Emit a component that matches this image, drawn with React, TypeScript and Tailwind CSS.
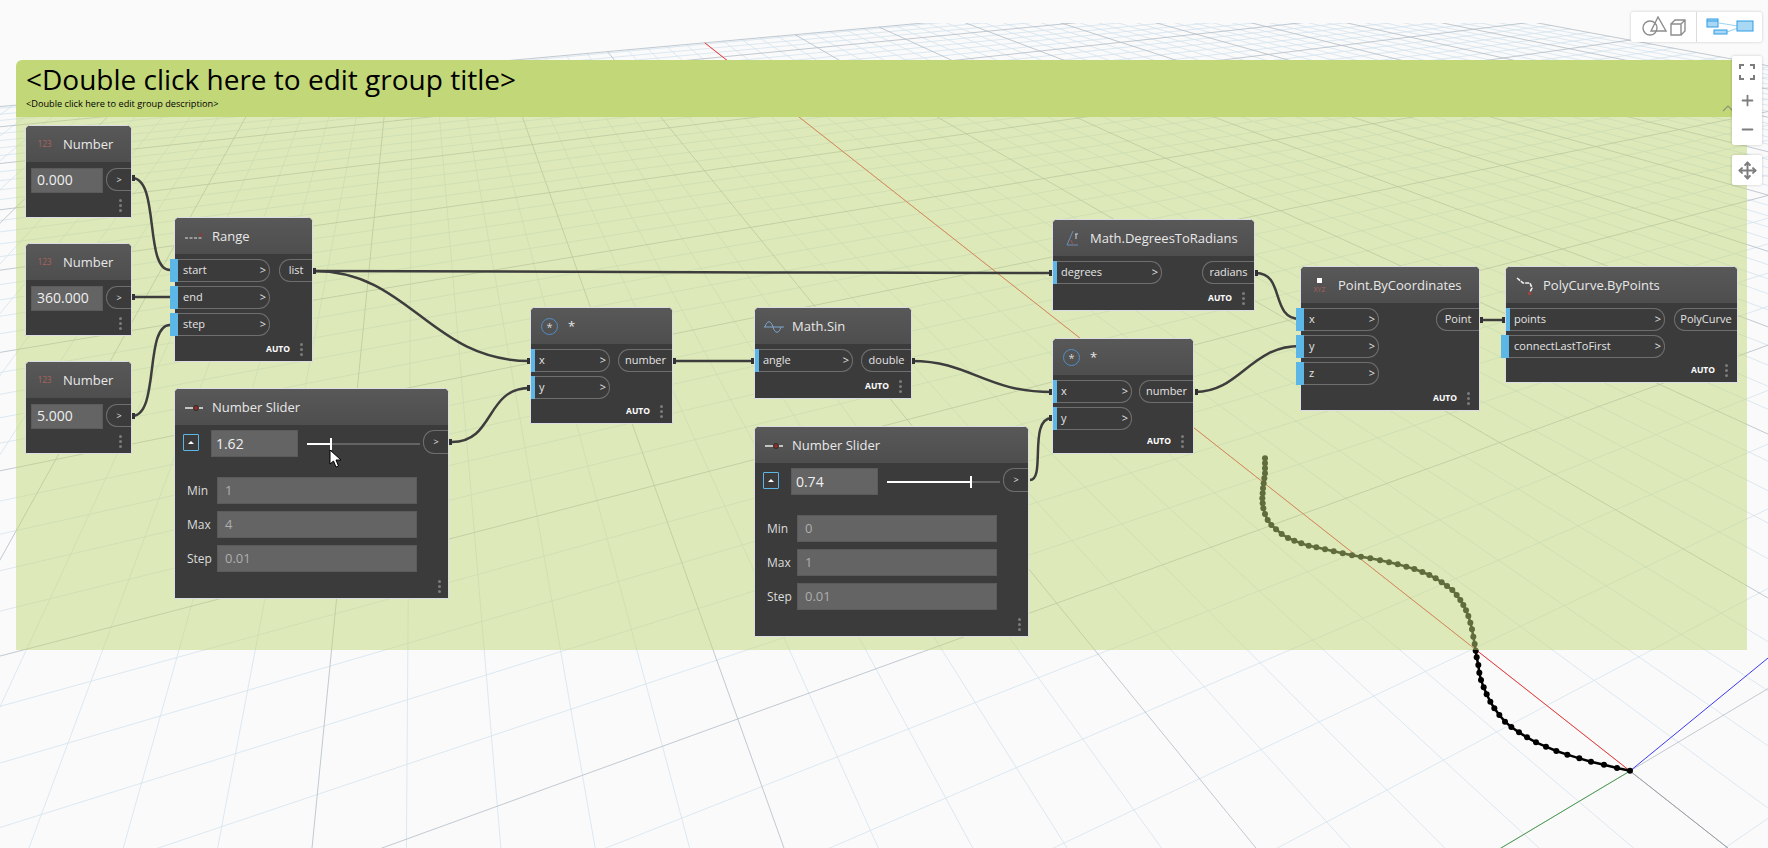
import type { ReactNode } from 'react';
import { Minus, Move, Plus } from 'lucide-react';
import clsx from 'clsx';

// ground plane of the 3D view: two vanishing points and the world origin on screen
const V1 = [414, -186];
const V2 = [3232, -186];
const O = [1630, 771];
const SU = 0.0735;
const SV = 0.031;

function project(u: number, v: number) {
  const a = u * SU;
  const b = v * SV;
  const w = a + b + 1;
  return [(a * V1[0] + b * V2[0] + O[0]) / w, (a * V1[1] + b * V2[1] + O[1]) / w];
}

function seg(u1: number, v1: number, u2: number, v2: number) {
  const p = project(u1, v1);
  const q = project(u2, v2);
  return `M${p[0].toFixed(1)} ${p[1].toFixed(1)}L${q[0].toFixed(1)} ${q[1].toFixed(1)}`;
}

function gridPaths() {
  const U_MAX = 43.3;
  const V_MIN = -30;
  const V_MAX = 45;
  let minor = '';
  let major = seg(U_MAX, V_MIN, U_MAX, V_MAX);
  for (let u = -13; u <= 43; u++) {
    const vFrom = Math.max(V_MIN, (0.03 - 1 - u * SU) / SV);
    const d = seg(u, vFrom, u, V_MAX);
    if (u % 5 === 0) major += d;
    else minor += d;
  }
  for (let v = V_MIN; v <= V_MAX; v++) {
    const uFrom = Math.max(-50, (0.03 - 1 - v * SV) / SU);
    const d = seg(uFrom, v, U_MAX, v);
    if (v % 5 === 0) major += d;
    else minor += d;
  }
  return { minor, major };
}

// curve points read off the picture, in a 3x crop with origin (1200,440)
const curve = [
  [195, 55], [195, 70], [195, 85], [195, 100], [193, 115], [191, 130], [189, 145], [188, 160], [187, 175], [188, 190],
  [190, 205], [195, 222], [203, 240], [214, 255], [228, 268], [245, 282], [264, 294], [283, 302], [304, 310], [326, 317],
  [349, 322], [375, 328], [401, 334], [428, 340], [456, 346], [483, 350], [511, 355], [540, 361], [567, 367], [593, 373],
  [619, 380], [643, 387], [667, 396], [688, 405], [707, 415], [725, 427], [741, 438], [757, 450], [770, 465], [781, 480],
  [790, 495], [798, 511], [805, 528], [811, 548], [816, 568], [820, 590], [824, 612], [827, 632], [830, 652], [835, 675],
  [838, 698], [843, 720], [851, 742], [860, 763], [871, 785], [883, 805], [898, 825], [915, 845], [934, 861], [957, 877],
  [981, 892], [1008, 907], [1038, 920], [1069, 933], [1102, 944], [1138, 955], [1173, 965], [1212, 974], [1251, 984], [1290, 992],
].map(([x, y]) => [1200 + x / 3, 440 + y / 3]);

function Ground() {
  const { minor, major } = gridPaths();
  const red = project(43.3, 0);
  const back = project(-12, 0);
  const greenEnd = project(0, -8);
  return (
    <svg className="absolute inset-0" width={1768} height={848}>
      <defs>
        <clipPath id="view">
          <rect x="0" y="23" width="1768" height="825" />
        </clipPath>
      </defs>
      <g clipPath="url(#view)">
        <path d={minor} stroke="#d4e3ee" strokeWidth={0.8} fill="none" />
        <path d={major} stroke="#b2bdc5" strokeWidth={0.8} fill="none" />
        <line x1={O[0]} y1={O[1]} x2={back[0]} y2={back[1]} stroke="#9aa0a4" strokeWidth={1} />
        <line x1={O[0]} y1={O[1]} x2={red[0]} y2={red[1]} stroke="#f23a3a" strokeWidth={1} />
        <line x1={O[0]} y1={O[1]} x2={greenEnd[0]} y2={greenEnd[1]} stroke="#4f9e4f" strokeWidth={1} />
        <line x1={O[0]} y1={O[1]} x2={1768} y2={658} stroke="#3a3af0" strokeWidth={1} />
      </g>
      <polyline points={curve.map((p) => p.join(',')).join(' ')} fill="none" stroke="#000" strokeWidth={2.5} />
      {curve.map((p, i) => (
        <circle key={i} cx={p[0]} cy={p[1]} r={3} fill="#000" />
      ))}
    </svg>
  );
}

const wires = [
  'M132 178C160 178 144 270 170 270',
  'M132 297L170 297',
  'M132 416C160 416 144 325 170 325',
  'M314 271C500 271 800 273 1052 273',
  'M314 271C410 271 430 361 530 361',
  'M452 442C495 442 485 388 530 388',
  'M673 361L754 361',
  'M912 361C970 361 985 392 1052 392',
  'M1030 480C1046 480 1028 418 1052 418',
  'M1195 392C1240 392 1250 346 1300 346',
  'M1256 273C1285 273 1270 319 1300 319',
  'M1481 320L1505 320',
];

// little stubs where a wire leaves or enters a port
const stubs = [
  [132, 178], [132, 297], [132, 416], [313, 271], [449, 442], [673, 361], [751, 361], [912, 361],
  [527, 361], [527, 388], [1049, 273], [1255, 273], [1049, 392], [1049, 418], [1195, 392], [1480, 320], [1502, 320],
];

function Wires() {
  return (
    <svg className="absolute inset-0" width={1768} height={848} fill="none">
      {wires.map((d) => (
        <path key={d} d={d} stroke="#3d3d3d" strokeWidth={2.5} />
      ))}
      {stubs.map(([x, y]) => (
        <rect key={`${x}-${y}`} x={x} y={y - 3} width={3} height={6} fill="#333" />
      ))}
    </svg>
  );
}

function Dots({ className }: { className?: string }) {
  return (
    <span className={clsx('flex flex-col gap-[2px]', className)}>
      <i className="h-[3px] w-[3px] rounded-full bg-[#7c7c7c]" />
      <i className="h-[3px] w-[3px] rounded-full bg-[#7c7c7c]" />
      <i className="h-[3px] w-[3px] rounded-full bg-[#7c7c7c]" />
    </span>
  );
}

function Auto() {
  return (
    <div className="mt-auto mb-[5px] flex h-[14px] items-center justify-end gap-[10px] pr-[9px]">
      <span className="text-[8.5px] font-bold text-white">AUTO</span>
      <Dots />
    </div>
  );
}

function Input({ label, w, out }: { label: string; w: string; out?: boolean }) {
  return (
    <div className={clsx('relative flex h-[23px] items-center justify-between rounded-r-[11px] border-y border-r border-[#6e6e6e] pr-[3px] pl-[8px] text-[11px] text-[#e4e4e4]', w)}>
      <i className={clsx('absolute top-[-1px] bottom-[-1px] bg-[#5cb6e6]', out ? 'left-[-5px] w-[8px]' : 'left-0 w-[4px]')} />
      <span className="relative">{label}</span>
      <span className="text-[11px]">&gt;</span>
    </div>
  );
}

function Output({ label, className }: { label: string; className?: string }) {
  return (
    <div className={clsx('flex h-[23px] items-center justify-center rounded-l-[11px] border-y border-l border-[#6e6e6e] text-[11px] text-[#e4e4e4]', className)}>
      {label}
    </div>
  );
}

function Node({ title, icon, className, children }: { title: string; icon: ReactNode; className: string; children: ReactNode }) {
  return (
    <div className={clsx('absolute flex flex-col rounded-t-[5px] border border-[#dcdce4] bg-[#3b3b3b]', className)}>
      <div className="flex h-[36px] shrink-0 items-center rounded-t-[4px] bg-gradient-to-b from-[#585858] to-[#4e4e4e] pt-[1px]">
        <span className="flex w-[37px] shrink-0 items-center justify-center">{icon}</span>
        <span className="text-[13px] text-[#e8e8e8]">{title}</span>
      </div>
      {children}
    </div>
  );
}

function NumberNode({ value, className }: { value: string; className: string }) {
  return (
    <Node
      title="Number"
      className={className}
      icon={<span className="text-[8.5px] tracking-tight text-[#a8635a]">123</span>}
    >
      <div className="flex items-start justify-between pt-[6px] pl-[5px]">
        <div className="flex h-[25px] w-[72px] items-center border border-[#5b5b5b] bg-[#646464] pb-[3px] pl-[5px] text-[14px] text-[#efefef]">{value}</div>
        <div className="flex h-[23px] w-[25px] items-center justify-center rounded-l-[11px] border-y border-l border-[#6e6e6e] text-[9px] text-[#e4e4e4]">&gt;</div>
      </div>
      <Dots className="mt-auto mb-[5px] ml-[93px]" />
    </Node>
  );
}

function Field({ label, value }: { label: string; value: string }) {
  return (
    <div className="flex h-[27px] items-center">
      <span className="w-[30px] text-[12px] text-[#dcdcdc]">{label}</span>
      <div className="flex h-full w-[200px] items-center border border-[#5b5b5b] bg-[#646464] pl-[7px] text-[13px] text-[#aeaeae]">{value}</div>
    </div>
  );
}

function SliderIcon() {
  return (
    <svg width="18" height="8" viewBox="0 0 18 8">
      <path d="M0 4h18" stroke="#e8e8e8" strokeWidth="1.5" />
      <circle cx="11" cy="4" r="2.5" fill="#8a2f28" stroke="#2c2c2c" />
    </svg>
  );
}

function SliderNode({ value, min, max, fill, className }: { value: string; min: string; max: string; fill: string; className: string }) {
  return (
    <Node title="Number Slider" className={className} icon={<SliderIcon />}>
      <div className="flex items-start pt-[5px]">
        <div className="mt-[4px] ml-[8px] flex h-[17px] w-[16px] items-center justify-center rounded-[1px] border border-[#5cb6e6]">
          <i className="border-x-[3px] border-b-[3px] border-x-transparent border-b-white" />
        </div>
        <div className="ml-[12px] flex h-[27px] w-[87px] items-center border border-[#5b5b5b] bg-[#646464] pl-[4px] text-[14px] text-[#efefef]">{value}</div>
        <div className="relative mt-[13px] ml-[9px] h-[2px] w-[114px] bg-[#646464]">
          <div className={clsx('absolute inset-y-0 left-0 bg-white', fill)} />
          <div className={clsx('absolute top-[-5px] h-[12px] w-[2px] bg-white', fill === 'w-[24px]' ? 'left-[23px]' : 'left-[83px]')} />
        </div>
        <div className="ml-[3px] flex h-[24px] w-[25px] items-center justify-center rounded-l-[11px] border-y border-l border-[#6e6e6e] text-[9px] text-[#e4e4e4]">&gt;</div>
      </div>
      <div className="mt-[20px] flex flex-col gap-[7px] pl-[12px]">
        <Field label="Min" value={min} />
        <Field label="Max" value={max} />
        <Field label="Step" value="0.01" />
      </div>
      <Dots className="mt-auto mb-[5px] ml-[263px]" />
    </Node>
  );
}

function StarIcon() {
  return (
    <span className="flex h-[17px] w-[17px] items-center justify-center rounded-full border border-[#4f8fc9] text-[11px] leading-none text-[#d8d8d8]">*</span>
  );
}

function StarNode({ className }: { className: string }) {
  return (
    <Node title="*" className={className} icon={<StarIcon />}>
      <div className="flex justify-between pt-[5px]">
        <div className="flex flex-col gap-[4px]">
          <Input label="x" w="w-[79px]" />
          <Input label="y" w="w-[79px]" />
        </div>
        <Output label="number" className="w-[54px]" />
      </div>
      <Auto />
    </Node>
  );
}

function ToolbarGeometry() {
  return (
    <svg width="46" height="22" viewBox="0 0 46 22" fill="none" stroke="#8d8d8d" strokeWidth="1.4">
      <circle cx="9" cy="12" r="7" />
      <path d="M17 1L10 15H25Z" />
      <path d="M30 8h10v11H30zM30 8l4-4h10v11l-4 4M40 8l4-4" />
    </svg>
  );
}

function ToolbarGraph() {
  return (
    <svg width="48" height="20" viewBox="0 0 48 20" fill="none">
      <path d="M13 6L32 9M21 15L32 11" stroke="#9fd4f2" strokeWidth="1.2" />
      <rect x="1" y="2" width="11" height="8" fill="#a9d8f5" stroke="#2f9be6" />
      <path d="M1 4h11M31 6h16" stroke="#2f9be6" />
      <rect x="8" y="13" width="13" height="4" fill="#a9d8f5" stroke="#2f9be6" />
      <rect x="31" y="4" width="16" height="10" fill="#a9d8f5" stroke="#2f9be6" />
    </svg>
  );
}

export default function App() {
  return (
    <div className="relative h-[848px] w-[1768px] overflow-hidden bg-[#fafafb] [font-family:'Open_Sans',sans-serif]">
      <Ground />

      {/* group */}
      <div className="absolute top-[60px] left-[16px] flex h-[590px] w-[1731px] flex-col rounded-t-[6px]">
        <div className="relative h-[57px] shrink-0 rounded-t-[6px] bg-[#c2d778] pl-[10px] text-black">
          <div className="text-[28px] leading-[38px]">&lt;Double click here to edit group title&gt;</div>
          <div className="text-[9.2px] leading-[11px]">&lt;Double click here to edit group description&gt;</div>
          <svg className="absolute top-[45px] right-[13px]" width="12" height="7" viewBox="0 0 12 7" fill="none" stroke="#8c9573" strokeWidth="1.2">
            <path d="M1 6l5-5 5 5" />
          </svg>
        </div>
        <div className="flex-1 bg-[#c2d778]/50" />
      </div>

      <Wires />

      <NumberNode value="0.000" className="top-[125px] left-[25px] h-[93px] w-[107px]" />
      <NumberNode value="360.000" className="top-[243px] left-[25px] h-[93px] w-[107px]" />
      <NumberNode value="5.000" className="top-[361px] left-[25px] h-[93px] w-[107px]" />

      <Node
        title="Range"
        className="top-[217px] left-[174px] h-[145px] w-[139px]"
        icon={
          <svg width="18" height="8" viewBox="0 0 18 8">
            <path d="M0 5h18" stroke="#e0e0e0" strokeWidth="1" strokeDasharray="3 1.5" />
            <path d="M16 0v4M14 2h4" stroke="#8f3b33" strokeWidth="1" />
          </svg>
        }
      >
        <div className="flex justify-between pt-[5px]">
          <div className="flex flex-col gap-[4px]">
            <Input label="start" w="w-[95px]" out />
            <Input label="end" w="w-[95px]" out />
            <Input label="step" w="w-[95px]" out />
          </div>
          <Output label="list" className="w-[33px]" />
        </div>
        <Auto />
      </Node>

      <SliderNode value="1.62" min="1" max="4" fill="w-[24px]" className="top-[388px] left-[174px] h-[211px] w-[275px]" />

      <StarNode className="top-[307px] left-[530px] h-[117px] w-[143px]" />

      <Node
        title="Math.Sin"
        className="top-[307px] left-[754px] h-[92px] w-[158px]"
        icon={
          <svg width="20" height="14" viewBox="0 0 20 14" fill="none" stroke="#7ea6cf" strokeWidth="1">
            <path d="M0 7h20" />
            <path d="M1 7C3 0 7 0 9 7S15 14 17 7" />
          </svg>
        }
      >
        <div className="flex justify-between pt-[5px]">
          <Input label="angle" w="w-[98px]" />
          <Output label="double" className="w-[50px]" />
        </div>
        <Auto />
      </Node>

      <SliderNode value="0.74" min="0" max="1" fill="w-[84px]" className="top-[426px] left-[754px] h-[211px] w-[275px]" />

      <StarNode className="top-[338px] left-[1052px] h-[116px] w-[142px]" />

      <Node
        title="Math.DegreesToRadians"
        className="top-[219px] left-[1052px] h-[92px] w-[203px]"
        icon={
          <svg width="16" height="18" viewBox="0 0 16 18" fill="none" strokeWidth="1">
            <path d="M9 1L3 15h11" stroke="#6a8fb8" />
            <path d="M7 10l2 5" stroke="#a0544a" />
            <path d="M11 4h3M12 4v5" stroke="#cfcfcf" />
          </svg>
        }
      >
        <div className="flex justify-between pt-[5px]">
          <Input label="degrees" w="w-[109px]" />
          <Output label="radians" className="w-[52px]" />
        </div>
        <Auto />
      </Node>

      <Node
        title="Point.ByCoordinates"
        className="top-[266px] left-[1300px] h-[145px] w-[180px]"
        icon={
          <span className="flex flex-col items-center leading-none">
            <i className="h-[5px] w-[5px] bg-white" />
            <span className="mt-[3px] text-[7px] text-[#a8635a]">XYZ</span>
          </span>
        }
      >
        <div className="flex justify-between pt-[5px]">
          <div className="flex flex-col gap-[4px]">
            <Input label="x" w="w-[78px]" out />
            <Input label="y" w="w-[78px]" out />
            <Input label="z" w="w-[78px]" out />
          </div>
          <Output label="Point" className="w-[43px]" />
        </div>
        <Auto />
      </Node>

      <Node
        title="PolyCurve.ByPoints"
        className="top-[266px] left-[1505px] h-[117px] w-[233px]"
        icon={
          <svg width="20" height="20" viewBox="0 0 20 20" fill="none">
            <path d="M2 2L8 7H15L17 12L14 18" stroke="#f0f0f0" strokeWidth="1.6" strokeDasharray="4 1" />
            <rect x="13" y="16" width="3" height="3" fill="#a3423a" />
          </svg>
        }
      >
        <div className="flex justify-between pt-[5px]">
          <div className="flex flex-col gap-[4px]">
            <Input label="points" w="w-[159px]" />
            <Input label="connectLastToFirst" w="w-[159px]" out />
          </div>
          <Output label="PolyCurve" className="w-[63px]" />
        </div>
        <Auto />
      </Node>

      {/* mouse pointer over the first slider */}
      <svg className="absolute top-[449px] left-[329px]" width="13" height="19" viewBox="0 0 13 19">
        <path d="M1 1v14l3.5-3 2.5 6 2.5-1-2.5-6h5Z" fill="#fff" stroke="#000" strokeWidth="1" />
      </svg>

      {/* view switch */}
      <div className="absolute top-[12px] left-[1631px] flex h-[30px] w-[131px] rounded-[2px] bg-white shadow-[0_0_3px_rgba(0,0,0,0.2)]">
        <div className="flex w-[66px] items-center justify-center border-r border-[#dcdcdc]">
          <ToolbarGeometry />
        </div>
        <div className="flex flex-1 items-center justify-center">
          <ToolbarGraph />
        </div>
      </div>

      {/* zoom controls */}
      <div className="absolute top-[56px] left-[1732px] flex h-[89px] w-[30px] flex-col items-center rounded-[2px] bg-white text-[#7d7d7d] shadow-[0_0_3px_rgba(0,0,0,0.2)]">
        <svg className="mt-[8px]" width="16" height="16" viewBox="0 0 16 16" fill="none" stroke="#7d7d7d" strokeWidth="2">
          <path d="M1 5V1h4M11 1h4v4M15 11v4h-4M5 15H1v-4" />
        </svg>
        <Plus className="mt-[12px]" size={17} strokeWidth={2.5} />
        <Minus className="mt-[12px]" size={17} strokeWidth={2.5} />
      </div>
      <div className="absolute top-[155px] left-[1732px] flex h-[30px] w-[30px] items-center justify-center rounded-[2px] bg-white text-[#7d7d7d] shadow-[0_0_3px_rgba(0,0,0,0.2)]">
        <Move size={19} strokeWidth={2.5} />
      </div>
    </div>
  );
}
